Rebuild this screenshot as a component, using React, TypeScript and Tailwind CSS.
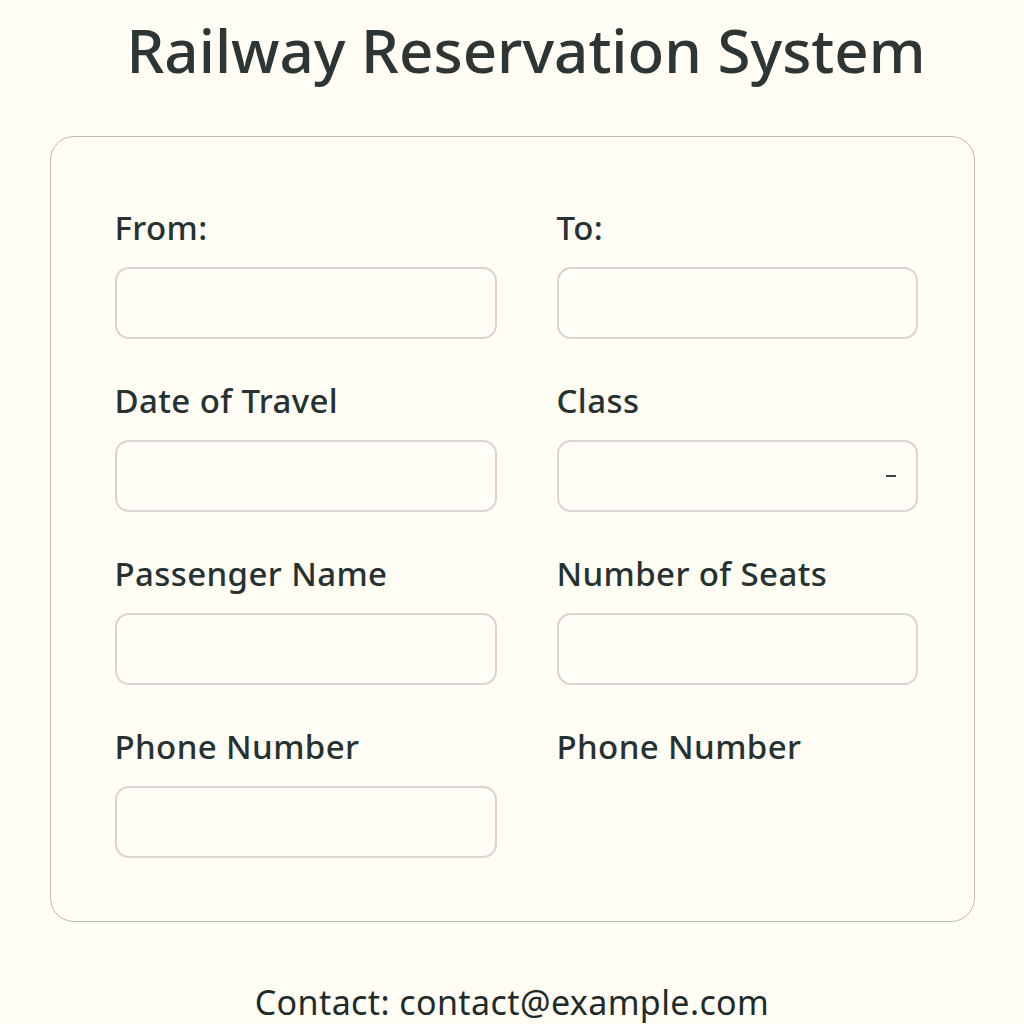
import React from "react";

const font = { fontFamily: '"Noto Sans", "Open Sans", sans-serif' };

function Field({ label, input = true, dash = false }: { label: string; input?: boolean; dash?: boolean }) {
  return (
    <div className="flex flex-col">
      <div className="text-[33px] leading-[40px] font-medium text-[#263232] tracking-[0.4px]">{label}</div>
      {input && (
        <div className="mt-[19px] h-[72px] rounded-[14px] border-2 border-[#d6d6d2] bg-[#fffdf6] relative flex items-center justify-end pr-[20px]">
          {dash && <span className="block w-[10px] h-[2px] bg-[#3a4444]" />}
        </div>
      )}
    </div>
  );
}

export default function App() {
  return (
    <div className="min-h-screen w-full bg-[#fffdf4] flex flex-col items-center" style={font}>
      <h1 className="pt-[14px] pl-[28px] text-[60px] leading-[72px] font-medium text-[#2d3535] tracking-[0px]">
        Railway Reservation System
      </h1>
      <div className="mt-[50px] w-[925px] rounded-[24px] border border-[#b9bcbf] pt-[71px] pb-[63px] pl-[64px]">
        <div className="grid grid-cols-[382px_361px] gap-x-[60px] gap-y-[42px]">
          <Field label="From:" />
          <Field label="To:" />
          <Field label="Date of Travel" />
          <Field label="Class" dash />
          <Field label="Passenger Name" />
          <Field label="Number of Seats" />
          <Field label="Phone Number" />
          <Field label="Phone Number" input={false} />
        </div>
      </div>
      <div className="mt-[60px] text-[34px] leading-[40px] text-[#1f2a2a] tracking-[0.4px]">Contact: contact@example.com</div>
    </div>
  );
}
